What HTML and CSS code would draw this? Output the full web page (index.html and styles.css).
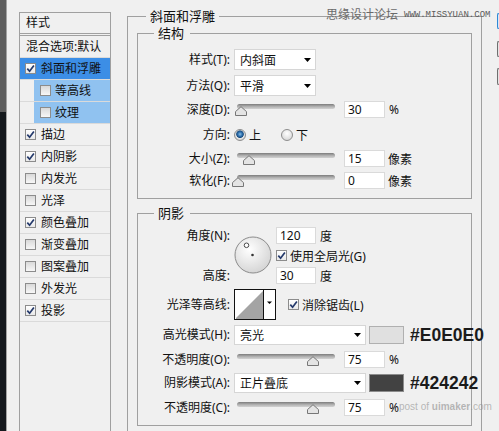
FILE: index.html
```html
<!DOCTYPE html>
<html lang="zh-CN">
<head>
<meta charset="utf-8">
<title>图层样式 - 斜面和浮雕</title>
<link rel="stylesheet" href="styles.css">
</head>
<body>
<div class="window">
  <div class="edge"><div class="edge-top"></div></div>

  <aside class="styles-list">
    <div class="list-head">样式</div>
    <div class="list-blend">混合选项:默认</div>
    <div class="item selected"><span class="cb on"><svg width="9" height="9" viewBox="0 0 9 9"><path d="M1.3 4.6L3.6 7.2L7.9 1.4" fill="none" stroke="#24396b" stroke-width="1.7"/></svg></span><span>斜面和浮雕</span></div>
    <div class="item sub"><div class="sub-fill"><span class="cb"></span><span>等高线</span></div></div>
    <div class="item sub"><div class="sub-fill"><span class="cb"></span><span>纹理</span></div></div>
    <div class="item"><span class="cb on"><svg width="9" height="9" viewBox="0 0 9 9"><path d="M1.3 4.6L3.6 7.2L7.9 1.4" fill="none" stroke="#24396b" stroke-width="1.7"/></svg></span><span>描边</span></div>
    <div class="item"><span class="cb on"><svg width="9" height="9" viewBox="0 0 9 9"><path d="M1.3 4.6L3.6 7.2L7.9 1.4" fill="none" stroke="#24396b" stroke-width="1.7"/></svg></span><span>内阴影</span></div>
    <div class="item"><span class="cb"></span><span>内发光</span></div>
    <div class="item"><span class="cb"></span><span>光泽</span></div>
    <div class="item"><span class="cb on"><svg width="9" height="9" viewBox="0 0 9 9"><path d="M1.3 4.6L3.6 7.2L7.9 1.4" fill="none" stroke="#24396b" stroke-width="1.7"/></svg></span><span>颜色叠加</span></div>
    <div class="item"><span class="cb"></span><span>渐变叠加</span></div>
    <div class="item"><span class="cb"></span><span>图案叠加</span></div>
    <div class="item"><span class="cb"></span><span>外发光</span></div>
    <div class="item"><span class="cb on"><svg width="9" height="9" viewBox="0 0 9 9"><path d="M1.3 4.6L3.6 7.2L7.9 1.4" fill="none" stroke="#24396b" stroke-width="1.7"/></svg></span><span>投影</span></div>
  </aside>

  <main class="panel">
    <fieldset class="group outer">
      <legend>斜面和浮雕</legend>

      <fieldset class="group inner structure">
        <legend>结构</legend>
        <div class="frow r-select">
          <span class="lbl">样式(T):</span>
          <div class="select short"><span>内斜面</span><svg class="arrow" width="7" height="4" viewBox="0 0 7 4"><path d="M0 0H7L3.5 4Z" fill="#000"/></svg></div>
        </div>
        <div class="frow r-select gap5">
          <span class="lbl">方法(Q):</span>
          <div class="select short"><span>平滑</span><svg class="arrow" width="7" height="4" viewBox="0 0 7 4"><path d="M0 0H7L3.5 4Z" fill="#000"/></svg></div>
        </div>
        <div class="frow r-slider gap5">
          <span class="lbl">深度(D):</span>
          <div class="slider"><div class="track"></div><svg class="thumb" style="left:1px" width="12" height="10" viewBox="0 0 12 10"><path d="M0.5 9.5V5.6L6 0.7L11.5 5.6V9.5Z" fill="#e4e4e4" stroke="#777"/></svg></div>
          <div class="num">30</div><span class="unit">%</span>
        </div>
        <div class="frow r-radio gap8">
          <span class="lbl">方向:</span>
          <span class="radio on"></span><span class="rtext">上</span>
          <span class="radio"></span><span class="rtext">下</span>
        </div>
        <div class="frow r-slider gap6">
          <span class="lbl">大小(Z):</span>
          <div class="slider"><div class="track"></div><svg class="thumb" style="left:9px" width="12" height="10" viewBox="0 0 12 10"><path d="M0.5 9.5V5.6L6 0.7L11.5 5.6V9.5Z" fill="#e4e4e4" stroke="#777"/></svg></div>
          <div class="num">15</div><span class="unit px">像素</span>
        </div>
        <div class="frow r-slider gap5">
          <span class="lbl">软化(F):</span>
          <div class="slider"><div class="track"></div><svg class="thumb" style="left:-2px" width="12" height="10" viewBox="0 0 12 10"><path d="M0.5 9.5V5.6L6 0.7L11.5 5.6V9.5Z" fill="#e4e4e4" stroke="#777"/></svg></div>
          <div class="num">0</div><span class="unit px">像素</span>
        </div>
      </fieldset>

      <fieldset class="group inner shadow">
        <legend>阴影</legend>
        <div class="angle-block">
          <span class="lbl a-lbl-top">角度(N):</span>
          <svg class="dial" width="38" height="38" viewBox="0 0 38 38">
            <defs>
              <radialGradient id="dialg" cx="0.4" cy="0.35" r="0.7">
                <stop offset="0" stop-color="#ffffff"/>
                <stop offset="1" stop-color="#d3d3d3"/>
              </radialGradient>
            </defs>
            <circle cx="19" cy="19" r="18" fill="url(#dialg)" stroke="#8c8c8c"/>
            <circle cx="12.5" cy="9.3" r="2.3" fill="#fff" stroke="#4a4a4a"/>
            <circle cx="18.5" cy="19" r="1.3" fill="#333"/>
          </svg>
          <div class="a-val-top"><div class="num angle">120</div><span class="unit">度</span></div>
          <div class="a-check"><span class="cb rcb on"><svg width="9" height="9" viewBox="0 0 9 9"><path d="M1.3 4.6L3.6 7.2L7.9 1.4" fill="none" stroke="#24396b" stroke-width="1.7"/></svg></span><span>使用全局光(G)</span></div>
          <span class="lbl a-lbl-bottom">高度:</span>
          <div class="a-val-bottom"><div class="num angle">30</div><span class="unit">度</span></div>
        </div>

        <div class="frow r-contour gap5">
          <span class="lbl">光泽等高线:</span>
          <svg class="contour" width="42" height="31" viewBox="0 0 42 31">
            <rect x="0.5" y="0.5" width="41" height="30" fill="#fff" stroke="#111"/>
            <path d="M2 30V29L29 2H29V30Z" fill="#a4a4a4"/>
            <path d="M29.5 1V30" stroke="#111"/>
            <path d="M33 12.5H38L35.5 15Z" fill="#000"/>
          </svg>
          <span class="cb rcb anti on"><svg width="9" height="9" viewBox="0 0 9 9"><path d="M1.3 4.6L3.6 7.2L7.9 1.4" fill="none" stroke="#24396b" stroke-width="1.7"/></svg></span><span>消除锯齿(L)</span>
        </div>

        <div class="frow r-mode gap5">
          <span class="lbl">高光模式(H):</span>
          <div class="select wide"><span>亮光</span><svg class="arrow" width="7" height="4" viewBox="0 0 7 4"><path d="M0 0H7L3.5 4Z" fill="#000"/></svg></div>
          <div class="swatch light"></div>
          <span class="hex">#E0E0E0</span>
        </div>
        <div class="frow r-slider gap6">
          <span class="lbl">不透明度(O):</span>
          <div class="slider"><div class="track"></div><svg class="thumb" style="left:73px" width="12" height="10" viewBox="0 0 12 10"><path d="M0.5 9.5V5.6L6 0.7L11.5 5.6V9.5Z" fill="#e4e4e4" stroke="#777"/></svg></div>
          <div class="num">75</div><span class="unit">%</span>
        </div>
        <div class="frow r-mode gap5">
          <span class="lbl">阴影模式(A):</span>
          <div class="select wide"><span>正片叠底</span><svg class="arrow" width="7" height="4" viewBox="0 0 7 4"><path d="M0 0H7L3.5 4Z" fill="#000"/></svg></div>
          <div class="swatch dark"></div>
          <span class="hex">#424242</span>
        </div>
        <div class="frow r-slider gap6">
          <span class="lbl">不透明度(C):</span>
          <div class="slider"><div class="track"></div><svg class="thumb" style="left:73px" width="12" height="10" viewBox="0 0 12 10"><path d="M0.5 9.5V5.6L6 0.7L11.5 5.6V9.5Z" fill="#e4e4e4" stroke="#777"/></svg></div>
          <div class="num">75</div><span class="unit">%</span>
        </div>
      </fieldset>
    </fieldset>
  </main>

  <div class="side">
    <div class="btn default"></div>
    <div class="btn"></div>
    <div class="btn"></div>
  </div>

  <div class="wm-top"><span>思缘设计论坛</span><span class="wm-site">WWW.MISSYUAN.COM</span></div>
  <div class="wm-bottom">post of <b>uimaker</b>.com</div>
</div>
</body>
</html>
```

FILE: styles.css
```css
* { box-sizing: border-box; }
html, body { margin: 0; padding: 0; }
body {
  background: #f0f0f0;
  font-family: "Noto Sans", "Noto Sans CJK SC", sans-serif;
  font-size: 12px;
  color: #111;
}

.window {
  position: relative;
  display: flex;
  align-items: flex-start;
  width: 499px;
  height: 431px;
  overflow: hidden;
  background: #f0f0f0;
}

/* dark strip on the far left */
.edge {
  flex: none;
  width: 7px;
  height: 431px;
  background: #15191d;
  border-right: 1px solid #a3a3a3;
}
.edge-top { height: 112px; background: #5e5e5e; }

/* styles list */
.styles-list {
  flex: none;
  width: 92px;
  height: 440px;
  margin: 12px 0 0 12px;
  border: 1px solid #a0a0a0;
}
.list-head {
  height: 21px;
  line-height: 20px;
  padding-left: 6px;
  border-bottom: 1px solid #a0a0a0;
  margin-bottom: 1px;
}
.list-blend {
  height: 23px;
  line-height: 21px;
  padding-left: 6px;
  border-top: 1px solid #a0a0a0;
  border-bottom: 1px solid #dadada;
  white-space: nowrap;
}
.item {
  display: flex;
  align-items: center;
  height: 22px;
  padding-left: 5px;
  border-bottom: 1px solid #dadada;
  background-clip: padding-box;
  line-height: 14px;
  white-space: nowrap;
}
.item.selected { background-color: #3c8ee6; }
.item.sub { padding-left: 14px; }
.sub-fill {
  flex: 1;
  align-self: stretch;
  display: flex;
  align-items: center;
  padding-left: 6px;
  background: #90c2f0;
}
.cb {
  flex: none;
  display: inline-flex;
  align-items: center;
  justify-content: center;
  width: 11px;
  height: 11px;
  margin-right: 5px;
  border: 1px solid #8c8c8c;
  background: linear-gradient(#d9d9d9, #f7f7f7);
}
.cb.on { background: linear-gradient(#ffffff, #e9e9e9); }
.cb svg { display: block; }
.sub-fill .cb { margin-right: 4px; }

/* main panel */
.panel {
  flex: none;
  width: 355px;
  margin: 9px 0 0 16px;
}
.group {
  margin: 0;
  padding: 0;
  min-width: 0;
  border: 1px solid #a0a0a0;
}
.group > legend {
  padding: 0 4px;
  font-size: 13px;
  line-height: 15px;
  color: #111;
}
.outer { padding: 2px 0 20px; }
.outer > legend { margin-left: 18px; }
.inner { margin: 0 9px; }
.inner > legend { margin-left: 16px; padding-right: 6px; }
.structure { padding: 8px 0 9px; }
.shadow { margin-top: 7px; padding: 6px 0 9px; }

.frow {
  display: flex;
  align-items: center;
  white-space: nowrap;
}
.r-select { height: 21px; }
.r-slider { height: 17px; }
.r-radio { height: 18px; }
.r-contour { height: 31px; }
.r-mode { height: 20px; }
.gap5 { margin-top: 5px; }
.gap6 { margin-top: 6px; }
.gap8 { margin-top: 8px; }

.lbl {
  flex: none;
  width: 92px;
  margin-right: 4px;
  text-align: right;
  line-height: 14px;
}

.select {
  flex: none;
  display: flex;
  align-items: center;
  justify-content: space-between;
  height: 21px;
  padding: 0 4px 0 5px;
  background: #fff;
  border: 1px solid #d6d6d6;
}
.select.short { width: 82px; }
.select.wide { width: 132px; height: 20px; }
.arrow { display: block; flex: none; }

.slider {
  position: relative;
  flex: none;
  width: 102px;
  height: 17px;
  margin-right: 8px;
}
.track {
  width: 98px;
  height: 5px;
  margin: 3px 0 0 3px;
  border-radius: 3px;
  background: linear-gradient(#7c7c7c, #b4b4b4 55%, #d2d2d2);
}
.thumb { position: absolute; top: 5px; display: block; }

.num {
  flex: none;
  width: 41px;
  height: 17px;
  padding-left: 3px;
  line-height: 15px;
  background: #fff;
  border: 1px solid #dadada;
}
.num.angle { width: 40px; }
.unit { margin-left: 4px; }
.unit.px { margin-left: 3px; }

.radio {
  flex: none;
  width: 12px;
  height: 12px;
  border-radius: 50%;
  border: 1px solid #8d8d8d;
  background: radial-gradient(circle at 50% 35%, #ffffff, #cfcfcf);
}
.radio.on {
  background: radial-gradient(circle at 50% 42%, #8cc0e6 0, #2d6fae 2.2px, #1b4d7e 3.4px, #e8e8e8 4.2px, #cfcfcf 6px);
}
.rtext { margin-left: 3px; margin-right: 20px; }

/* angle + altitude block */
.angle-block {
  display: grid;
  grid-template-columns: 92px 38px auto;
  grid-template-rows: 17px 13px 17px;
  column-gap: 4px;
  row-gap: 5px;
  white-space: nowrap;
}
.angle-block .lbl { margin-right: 0; align-self: center; }
.a-lbl-top { grid-column: 1; grid-row: 1; }
.a-lbl-bottom { grid-column: 1; grid-row: 3; }
.dial { grid-column: 2; grid-row: 1 / span 3; align-self: start; margin-top: 9px; display: block; }
.a-val-top { grid-column: 3; grid-row: 1; display: flex; align-items: center; }
.a-val-bottom { grid-column: 3; grid-row: 3; display: flex; align-items: center; }
.a-check { grid-column: 3; grid-row: 2; display: flex; align-items: center; }
.rcb { margin-right: 3px; }
.rcb.anti { margin-left: 12px; }

.contour { display: block; flex: none; }

.swatch {
  flex: none;
  width: 35px;
  height: 18px;
  margin-left: 3px;
  border: 1px solid #b0b0b0;
}
.swatch.light { background: #e0e0e0; }
.swatch.dark { background: #424242; border-color: #8c8c8c; }
.hex {
  flex: none;
  margin-left: 6px;
  font-family: "Liberation Sans", Arial, sans-serif;
  font-weight: bold;
  font-size: 17.5px;
  line-height: 20px;
  color: #1b1b1b;
}

/* dialog buttons peeking in at the right edge */
.side {
  flex: none;
  display: flex;
  flex-direction: column;
  width: 17px;
  padding: 13px 0 0 15px;
}
.btn {
  height: 16px;
  border: 1px solid #6f6f6f;
  border-right: none;
  border-radius: 2px 0 0 2px;
  background: #e4e4e4;
}
.btn.default { border-color: #2f88d6; background: #d7e8f7; }
.btn + .btn { margin-top: 12px; }
.btn:last-child { height: 17px; margin-top: 11px; }

/* watermarks over the screenshot */
.wm-top {
  position: absolute;
  left: 326px;
  top: 8px;
  display: flex;
  align-items: center;
  gap: 6px;
  color: #6a6a6a;
  font-size: 12px;
  line-height: 14px;
}
.wm-site {
  font-family: "Liberation Mono", monospace;
  font-size: 9px;
  color: #5a5a5a;
}
.wm-bottom {
  position: absolute;
  left: 399px;
  top: 400px;
  font-family: "Liberation Sans", Arial, sans-serif;
  font-size: 10px;
  line-height: 13px;
  color: rgba(140, 140, 140, 0.6);
}
```
